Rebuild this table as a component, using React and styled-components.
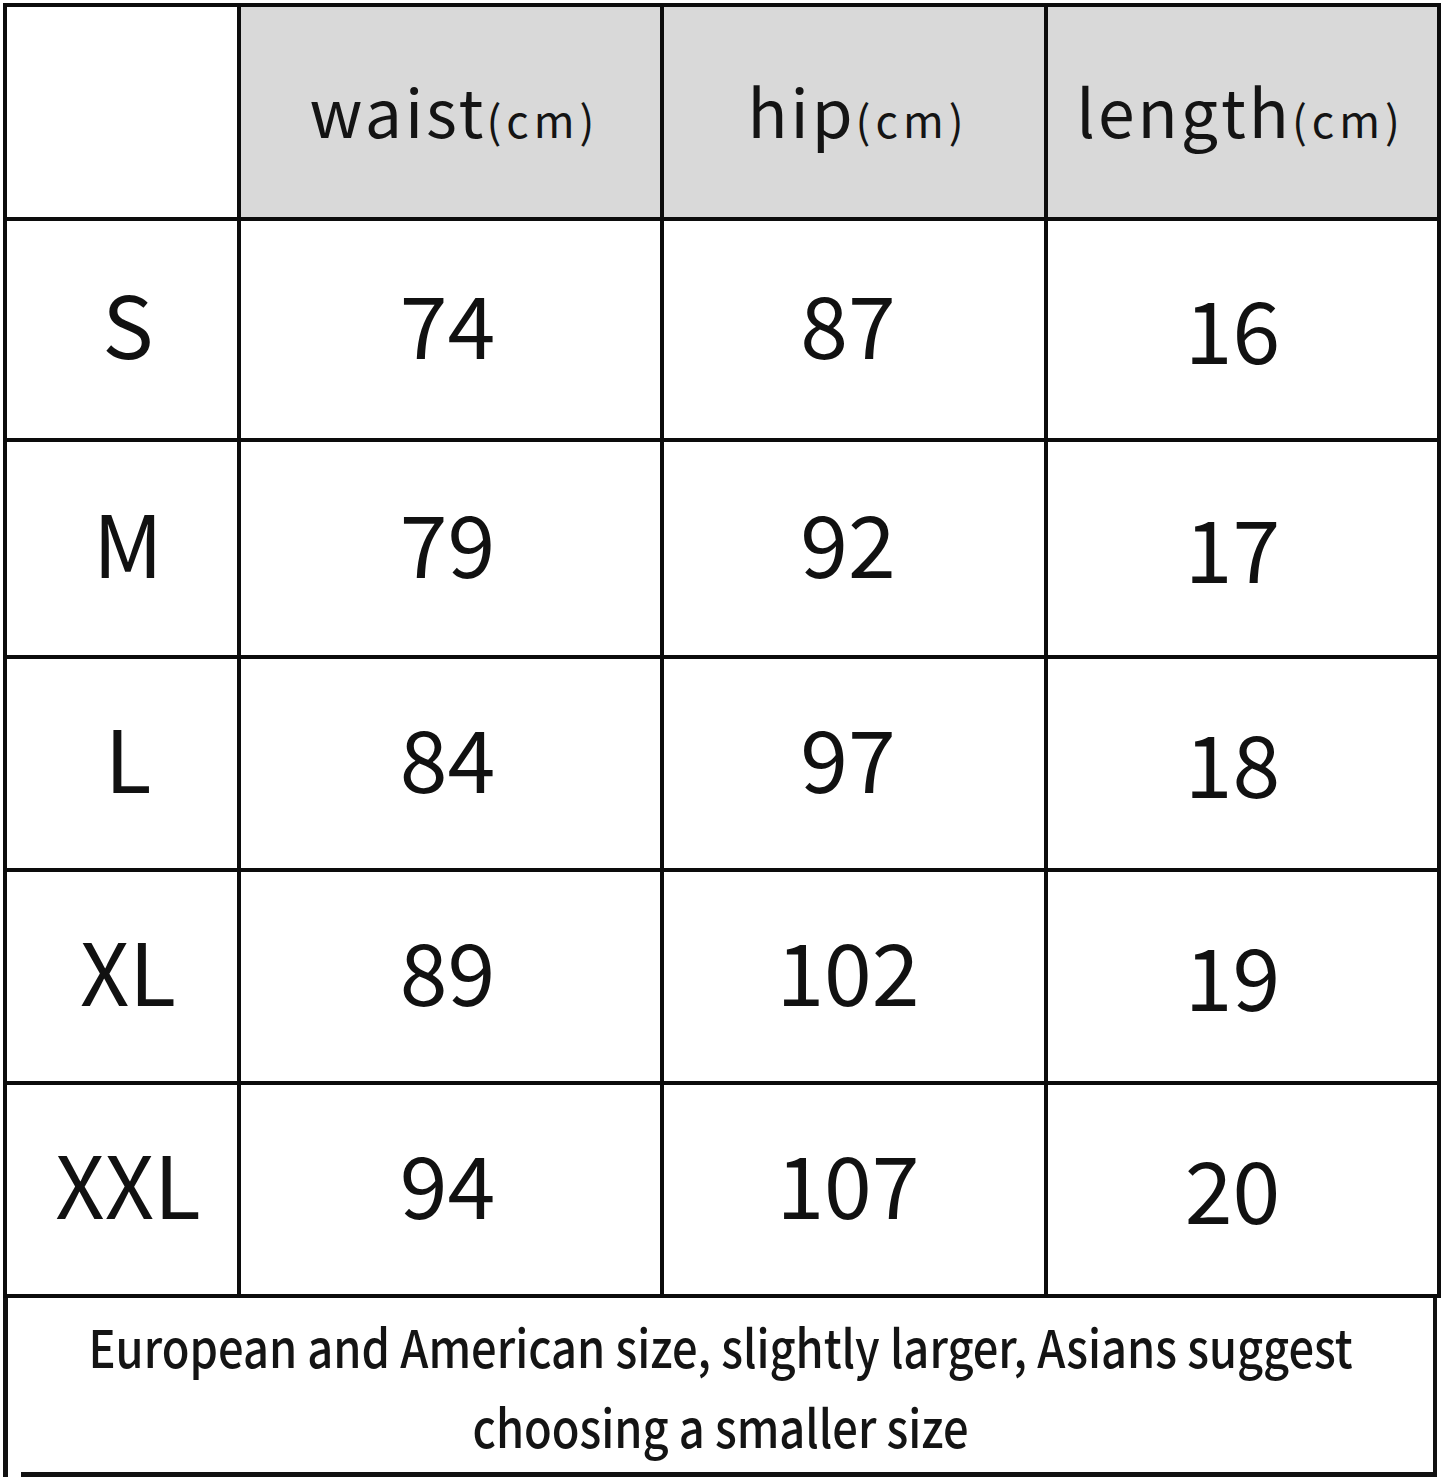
import React from 'react';
import styled, { createGlobalStyle } from 'styled-components';

const GlobalStyle = createGlobalStyle`
  html, body {
    margin: 0;
    padding: 0;
    background: #fff;
  }
  body {
    font-family: "Noto Sans CJK SC", "Noto Sans", sans-serif;
    color: #111;
  }
`;

const Page = styled.div`
  padding: 3px 0 0 3px;
  width: 1450px;
  height: 1478px;
  overflow: hidden;
`;

const Grid = styled.div`
  display: grid;
  grid-template-columns: 230px 419px 380px 389px;
  grid-template-rows: 210px 217px 213px 209px 209px 209px;
  gap: 4px;
  padding: 4px;
  background: #0c0c0c;
  width: fit-content;
`;

const Cell = styled.div`
  background: ${p => (p.$head ? '#d9d9d9' : '#fff')};
  display: flex;
  align-items: center;
  justify-content: center;
`;

const HeadLabel = styled.span`
  font-size: 66px;
  letter-spacing: 3px;
  line-height: 1;
  color: #141414;
  transform: translate(${p => p.$dx || 0}px, -3px);
`;

const Unit = styled.span`
  font-size: 44px;
  letter-spacing: 5px;
`;

const Value = styled.span`
  font-size: 86px;
  line-height: 1;
  color: #111;
  transform: translate(${p => p.$dx || 0}px, ${p => p.$dy || 0}px);
`;

const Note = styled.div`
  position: relative;
  width: 1425px;
  height: 179px;
  border-left: 5px solid #111;
  border-right: 4px solid #111;
  display: flex;
  align-items: center;
  justify-content: center;

  &::after {
    content: '';
    position: absolute;
    left: 13px;
    right: -4px;
    bottom: 0;
    height: 5px;
    background: #111;
  }
`;

const NoteText = styled.p`
  margin: 0;
  font-size: 52px;
  font-weight: 500;
  line-height: 80px;
  text-align: center;
  white-space: nowrap;
  color: #141414;
  transform: scaleX(0.87) translateY(-2px);
`;

// small per-column offsets so the glyphs sit where the chart has them
const columns = [
  { key: 'size', dx: 6, dy: -8 },
  { key: 'waist', dx: -3, dy: -8 },
  { key: 'hip', dx: -6, dy: -8 },
  { key: 'length', dx: -10, dy: -3 },
];

const headers = [
  { label: 'waist', dx: 4 },
  { label: 'hip', dx: 4 },
  { label: 'length', dx: -2 },
];

const rows = [
  { size: 'S', waist: 74, hip: 87, length: 16 },
  { size: 'M', waist: 79, hip: 92, length: 17 },
  { size: 'L', waist: 84, hip: 97, length: 18 },
  { size: 'XL', waist: 89, hip: 102, length: 19 },
  { size: 'XXL', waist: 94, hip: 107, length: 20 },
];

export default function App() {
  return (
    <>
      <GlobalStyle />
      <Page>
        <Grid>
          <Cell />
          {headers.map(h => (
            <Cell key={h.label} $head>
              <HeadLabel $dx={h.dx}>
                {h.label}
                <Unit>(cm)</Unit>
              </HeadLabel>
            </Cell>
          ))}
          {rows.map(r => (
            <React.Fragment key={r.size}>
              {columns.map(c => (
                <Cell key={c.key}>
                  <Value $dx={c.dx} $dy={c.dy}>
                    {r[c.key]}
                  </Value>
                </Cell>
              ))}
            </React.Fragment>
          ))}
        </Grid>
        <Note>
          <NoteText>
            European and American size, slightly larger, Asians suggest
            <br />
            choosing a smaller size
          </NoteText>
        </Note>
      </Page>
    </>
  );
}
